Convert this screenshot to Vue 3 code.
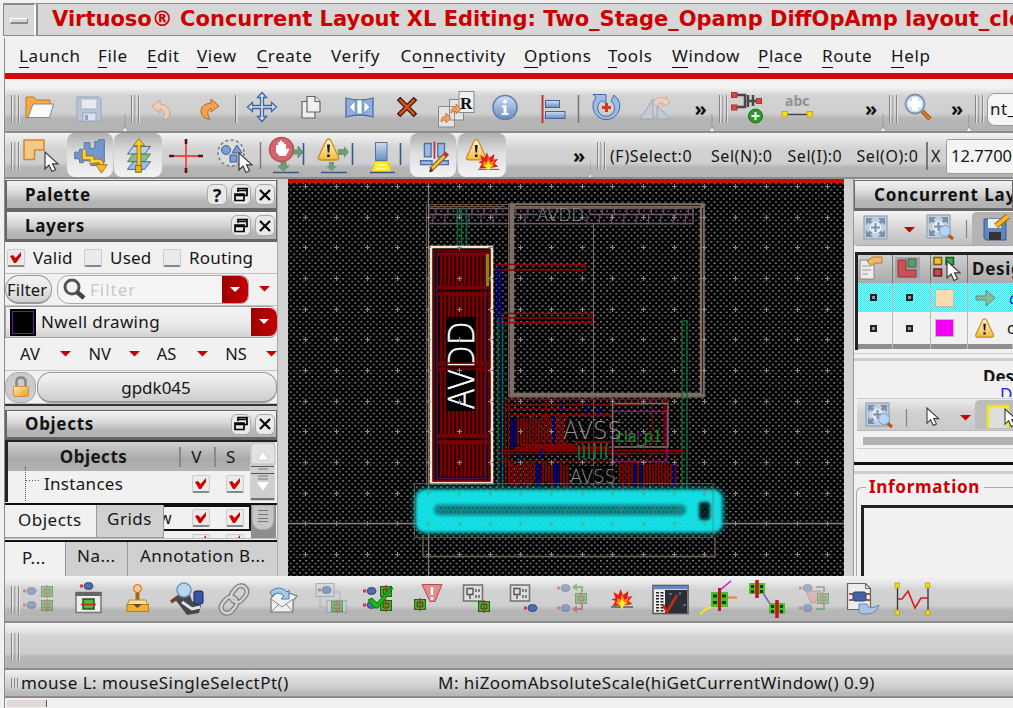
<script setup>
import { h } from 'vue'

// Icon slot: box is [x, y, w, h] in window coordinates, so a toolbar is a row of adjacent slots.
const Ic = (props, { slots }) =>
  h('svg', { width: props.box[2], height: props.box[3], viewBox: props.box.join(' '), class: 'ic' }, slots.default ? slots.default() : [])
Ic.props = ['box']

const menus = [
  ['', 'L', 'aunch', 79], ['', 'F', 'ile', 49], ['', 'E', 'dit', 50], ['', 'V', 'iew', 59.5], ['', 'C', 'reate', 74.5],
  ['Ver', 'i', 'fy', 69.5], ['Co', 'n', 'nectivity', 123.5], ['', 'O', 'ptions', 84], ['', 'T', 'ools', 64],
  ['', 'W', 'indow', 86], ['', 'P', 'lace', 64], ['', 'R', 'oute', 69], ['', 'H', 'elp', 60],
]

let seed = 7
const rnd = () => (seed = (seed * 16807) % 2147483647) / 2147483647
const crosses = []
for (let r = 0; r < 13; r++) for (let c = 0; c < 18; c++) crosses.push([Math.round(305.3 + c * 30.7) + 0.5, Math.round(186 + r * 30.65) + 0.5])
const crossPath = crosses.map(([x, y]) => `M${x - 2.5} ${y}h5M${x} ${y - 2.5}v5`).join('')
const stripes = []
for (let x = 440; x < 486; x += 4) stripes.push(x)
const bars = []
const fill = (x0, x1, y0, y1) => {
  for (let x = x0; x < x1; x += 3) {
    const k = rnd()
    bars.push({ x, y: y0 + Math.round(rnd() * 4), h: y1 - y0 - Math.round(rnd() * 4), c: k < 0.22 ? '#00008c' : '#800000' })
  }
}
fill(511, 566, 415, 445)
fill(509, 568, 461, 485)
fill(619, 676, 461, 485)
const ticks = []
for (let x = 436; x < 506; x += 12) ticks.push(x)
for (let x = 516; x < 538; x += 12) ticks.push(x)
for (let x = 590; x < 692; x += 12.3) ticks.push(x)
const greens = [579, 584, 589, 595, 601, 606]
</script>

<template>
  <div class="page">
    <svg class="defs" width="0" height="0">
      <defs>
        <linearGradient id="gor" x1="0" y1="0" x2="1" y2="1"><stop offset="0" stop-color="#ffe9a8" /><stop offset="1" stop-color="#ee9a20" /></linearGradient>
        <linearGradient id="gbl" x1="0" y1="0" x2="0" y2="1"><stop offset="0" stop-color="#cfdff2" /><stop offset="1" stop-color="#6a8cc0" /></linearGradient>
        <linearGradient id="gye" x1="0" y1="0" x2="0" y2="1"><stop offset="0" stop-color="#fffbe0" /><stop offset="1" stop-color="#f3b93c" /></linearGradient>
        <g id="grip"><path d="M.5 0v28M4 0v28M7.500 0v28" stroke="#858585" /><path d="M1.500 0v28M5 0v28M8.500 0v28" stroke="#eee" stroke-width=".7" /></g>
        <g id="inst"><rect x=".7" y="1.700" width="10.600" height="9.600" fill="#7ed84a" stroke="#1c6418" stroke-width="1.400" /><rect x="3" y="4" width="6" height="5" fill="#3fae2c" stroke="#123d10" /><path d="M6 0v13" stroke="#d42020" stroke-width="1.300" /></g>
        <g id="plug"><path d="M3 4h2M12 4h2.500" stroke="#8b8b9b" /><rect x="0" y="2.500" width="3" height="3" fill="#d33" /><rect x="4.500" y=".8" width="8" height="6.400" rx="2.500" fill="#4a70b4" stroke="#28407a" /></g>
        <g id="cursor"><path d="M0 0v17l4-4 3 6.500 3.500-1.700-3-6h5.500z" fill="#fff" stroke="#3a3a3a" stroke-width="1.200" /></g>
        <g id="warn"><path d="M11 1Q12.500 1 13.500 3L21 19Q22 22 19 22H3Q0 22 1 19L8.500 3Q9.500 1 11 1z" fill="url(#gye)" stroke="#c98a18" stroke-width="1.300" /><path d="M9.500 6.500h3l-.7 8h-1.600zM9.700 16.500h2.600v2.600H9.700z" fill="#1a1a1a" /></g>
        <g id="burst"><path d="M1 17L4 12 0 10.500l4-1.500L2 3l5 3L9 0l2.500 6L17 2l-1 6 5-1-4 5 4 3-5 1z" fill="#e81c10" /><path d="M5 14l1-5 3 2 1.500-6L13 11l4-3-1.500 6z" fill="#ff8a1c" /><path d="M10.500 9l2 4.500 4 .5-4 2-2 5-2-5-4-2 4-.5z" fill="#ffee20" /></g>
        <g id="frame4"><rect x="0" y="0" width="23" height="23" fill="#c3cedb" stroke="#90a2ba" stroke-width="1.200" /><path d="M2 9V2h7L6.500 4.500 9 7 7 9 4.500 6.500zM14 2h7v7l-2.500-2.500L16 9l-2-2 2.500-2.500zM2 14v7h7l-2.500-2.500L9 16l-2-2-2.500 2.500zM21 14v7h-7l2.500-2.500L14 16l2-2 2.500 2.500z" fill="#7890ac" /><circle cx="11.500" cy="11.500" r="6" fill="#e6ecf3" /><path d="M11.500 7v9M7 11.500h9" stroke="#7890ac" stroke-width="2" /></g>
        <g id="lens"><path d="M8 9l6 5" stroke="#b4561a" stroke-width="3" /><circle cx="6" cy="6" r="5.500" fill="#b4d4f4" stroke="#7aa0cc" /></g>
        <g id="dn"><path d="M0 0h11L5.500 5.500z" fill="#c40000" /></g>
        <g id="doc"><rect width="11" height="16" fill="#e8e8e8" stroke="#777" /></g>
      </defs>
    </svg>

    <header class="title">
      <span class="sysbtn"><i /></span>
      <span class="caption">Virtuoso® Concurrent Layout XL Editing: Two_Stage_Opamp DiffOpAmp layout_cle</span>
    </header>

    <div class="win">
      <nav class="menu">
        <span v-for="m in menus" :key="m[1] + m[2]" :style="{ width: m[3] + 'px' }">{{ m[0] }}<b>{{ m[1] }}</b>{{ m[2] }}</span>
      </nav>

      <div class="tb tb1">
        <Ic :box="[5, 79, 17, 54]"><use href="#grip" x="11" y="95" /></Ic>
        <Ic :box="[22, 79, 40, 54]">
          <path d="M26 118V98q0-1 1-1h7l2 3h14v7H34l-5 10z" fill="#f2ab45" stroke="#c8781c" /><path d="M33 104h20.500l-4 13.500H28z" fill="#fafafa" stroke="#888" />
        </Ic>
        <Ic :box="[62, 79, 60, 54]">
          <path d="M77 97h22l2 2v22H77z" fill="#b9c4d6" stroke="#9aa6ba" /><rect x="81" y="99" width="16" height="10" fill="#e6eaf2" stroke="#aab4c6" /><rect x="83" y="113" width="13" height="8" fill="#dde2ec" stroke="#9aa6ba" /><rect x="85" y="115" width="3" height="5" fill="#93a2bd" />
        </Ic>
        <Ic :box="[122, 79, 24, 54]"><path d="M121 132l4-5 4 5zM125 114v14" fill="#f1f1f1" stroke="#999" /><use href="#grip" x="131" y="95" /></Ic>
        <Ic :box="[146, 79, 44, 54]"><path d="M152 106l8-6v4q10 1 10 9 0 5-7 7 4-9-3-11v4z" fill="#eccfbc" stroke="#c9a48c" /></Ic>
        <Ic :box="[190, 79, 52, 54]"><path d="M219 106l-8-7v4q-10 1-10 8 0 7 9 8.500-5-8.500 1-11.500v4z" fill="#f3a152" stroke="#b96718" /><path d="M235.500 95v28" stroke="#777" /><path d="M237 95v28" stroke="#eee" /></Ic>
        <Ic :box="[242, 79, 48, 54]"><path d="M262 92.500l4.500 5h-3v8h8v-3l5 4.500-5 4.500v-3h-8v8h3l-4.500 5-4.500-5h3v-8h-8v3l-5-4.500 5-4.500v3h8v-8h-3z" fill="#cfe0f4" stroke="#42649c" stroke-width="1.300" /></Ic>
        <Ic :box="[290, 79, 46, 54]"><g fill="#efefef" stroke="#666" stroke-width="1.200"><path d="M302 101.500h13V118h-13z" /><path d="M307 96.500h8l5 5V112h-13z" /><path d="M315 96.500v5h5" /></g></Ic>
        <Ic :box="[336, 79, 52, 54]"><path d="M346 98q14 4 27 0v19q-13-4-27 0z" fill="#8fb0dc" stroke="#4a6ca6" stroke-width="1.300" /><path d="M349 107l6-6v12zM370 107l-6-6v12zM357 100h5v14h-5z" fill="#fff" stroke="#5d7fb5" stroke-width=".7" /></Ic>
        <Ic :box="[388, 79, 44, 54]"><path d="M398.500 98.500l17 17M415.500 98.500l-17 17" stroke="#3c1208" stroke-width="5" /><path d="M399.500 99.500l15 15M414.500 99.500l-15 15" stroke="#d2501c" stroke-width="2.800" /></Ic>
        <Ic :box="[432, 79, 50, 54]">
          <path d="M438.500 106.500h16v20.500h-16zM449.500 99.500h14V120h-14z" fill="#e4e4e4" stroke="#888" /><rect x="459" y="91.500" width="15" height="21" fill="#f0f0f0" stroke="#888" /><path d="M441 122q0-6 5-6v-3l5 5-5 5v-3q-3 0-5 2zM451 113q0-6 5-6v-3l5 5-5 5v-3q-3 0-5 2z" fill="#f0a060" stroke="#b87030" stroke-width=".8" /><text x="460" y="109" class="serifR">R</text>
        </Ic>
        <Ic :box="[482, 79, 48, 54]"><circle cx="505" cy="107.500" r="12" fill="url(#gbl)" stroke="#5d7fb5" stroke-width="1.600" /><circle cx="505" cy="101.500" r="2" fill="#fff" /><path d="M502 105.500h4.500v7.500h2v2h-7v-2h2v-5.500H502z" fill="#fff" /></Ic>
        <Ic :box="[530, 79, 56, 54]"><path d="M542.500 95v28" stroke="#c03434" stroke-width="2" /><rect x="545.500" y="100.500" width="14" height="7" fill="url(#gbl)" stroke="#44659c" /><rect x="545.500" y="111.500" width="19.500" height="7" fill="url(#gbl)" stroke="#44659c" /><path d="M578.500 95v28" stroke="#777" stroke-width="1.500" /></Ic>
        <Ic :box="[586, 79, 44, 54]"><path d="M614 95l-3 6a8.500 8.500 0 1 1-9-.5l4 3V94.500H593l3 3a13.500 13.500 0 1 0 18-2.500z" fill="#9dbce4" stroke="#4568a4" /><path d="M606.500 103v9M602 107.500h9" stroke="#d43a1c" stroke-width="3" /></Ic>
        <Ic :box="[630, 79, 56, 54]"><path d="M640 119l13-20v20zM657 119v-14l13 14z" fill="#c3cad3" stroke="#9fa8b4" /><path d="M653 103q4-9 13-4v-3l4 7-8 3 1-3q-5-2-6 4z" fill="#ecd0bf" stroke="#caa994" stroke-width=".8" /></Ic>
        <Ic :box="[686, 79, 30, 54]"><text x="694.500" y="115.500" class="more">»</text><path d="M708 132l4-5 4 5M712 114v14" fill="#f1f1f1" stroke="#999" /></Ic>
        <Ic :box="[716, 79, 14, 54]"><use href="#grip" x="719" y="95" /></Ic>
        <Ic :box="[730, 79, 40, 54]"><path d="M737 95h8v12h-8M748 95v12M748 101h8M753 95v11" fill="none" stroke="#484848" stroke-width="2.500" /><rect x="731.500" y="92.500" width="5.500" height="5" fill="#d44" stroke="#a33" /><rect x="731.500" y="105" width="5.500" height="5" fill="#d44" stroke="#a33" /><rect x="756.500" y="98.500" width="5" height="5" fill="#d44" stroke="#a33" /><circle cx="755.500" cy="116" r="7" fill="#2f9a2c" stroke="#1c6a1a" /><path d="M755.500 112v8M751.500 116h8" stroke="#fff" stroke-width="2" /></Ic>
        <Ic :box="[770, 79, 58, 54]"><text x="785" y="106" class="abc">abc</text><path d="M785 114.500h24" stroke="#3b4654" stroke-width="1.500" /><rect x="782" y="111.500" width="5.500" height="5.500" fill="#f6d81c" stroke="#b99a10" stroke-width=".7" /><rect x="807" y="111.500" width="5.500" height="5.500" fill="#f6d81c" stroke="#b99a10" stroke-width=".7" /></Ic>
        <Ic :box="[828, 79, 58, 54]"><text x="865" y="115.500" class="more">»</text><path d="M879 132l4-5 4 5M883 114v14" fill="#f1f1f1" stroke="#999" /></Ic>
        <Ic :box="[886, 79, 14, 54]"><use href="#grip" x="889" y="95" /></Ic>
        <Ic :box="[900, 79, 44, 54]"><path d="M922 111l8 8" stroke="#8a4a1a" stroke-width="4.500" /><path d="M922 111l8 8" stroke="#e07820" stroke-width="2.500" /><circle cx="915" cy="104" r="9.500" fill="#cfe0f2" stroke="#7b92ac" stroke-width="1.800" /><path d="M912 97.500h6v3.500h3.500v6H918v3.500h-6V107h-3.500v-6h3.500z" fill="#fff" /></Ic>
        <Ic :box="[944, 79, 29, 54]"><text x="951" y="115.500" class="more">»</text><path d="M965 132l4-5 4 5M969 114v14" fill="#f1f1f1" stroke="#999" /></Ic>
        <Ic :box="[973, 79, 14, 54]"><use href="#grip" x="975" y="95" /></Ic>
        <span class="combo">nt_</span>
      </div>

      <div class="tb tb2">
        <Ic :box="[5, 133, 17, 46]"><use href="#grip" x="11" y="142" /></Ic>
        <Ic :box="[22, 133, 45, 46]"><path d="M24 140h20v10h-9.500v9.500H24z" fill="#f5c888" stroke="#cf8630" stroke-width="1.500" /><use href="#cursor" x="45" y="152" /></Ic>
        <Ic :box="[67, 133, 46, 46]" class="on"><path d="M74 153h5v-3h5v-7h6v6h5v-7h4v-2h6v24h-6v3h-8v-5h-8v2h-4v-4h-5z" fill="#7396cb" stroke="#5074aa" /><path d="M84 151v8h8v4q8-2 10 1v5" fill="none" stroke="#a8781a" stroke-width="5" /><path d="M84 150.500v8.500h8v4q8-2 10 1v5" fill="none" stroke="#fbd13c" stroke-width="3" /><path d="M96 166h12l-6 9z" fill="#f6b820" stroke="#a8781a" /></Ic>
        <Ic :box="[114, 133, 48, 46]" class="on sh1"><path d="M133 147h18l-6 8h-18z" fill="#b7d0f0" stroke="#3b5d96" /><path d="M133 155h18l-6 8h-18z" fill="#8cbc8c" stroke="#4a7a4c" /><path d="M133 163h18l-6 8h-18z" fill="#9dbde8" stroke="#3b5d96" /><path d="M139 139l6 7h-4v22h-4v-22h-4z" fill="#f8c81c" stroke="#9a7812" /><rect x="135.500" y="167" width="6" height="7" fill="#e8b810" stroke="#8a6a10" /></Ic>
        <Ic :box="[162, 133, 46, 46]"><path d="M169 156h34M186 140v32" stroke="#f04848" stroke-width="1.800" /><path d="M169 156h5M198 156h5M186 139v5M186 168v5" stroke="#5c1010" stroke-width="2.600" /></Ic>
        <Ic :box="[208, 133, 60, 46]"><circle cx="231" cy="153" r="13" fill="#dcdcdc" stroke="#777" stroke-width="1.400" stroke-dasharray="3 2.500" /><circle cx="226" cy="150" r="4.500" fill="#7c9fd0" stroke="#3f5f97" /><path d="M237 145l5 8h-10zM230 155h7v7h-7z" fill="#7c9fd0" stroke="#3f5f97" /><use href="#cursor" x="239" y="153" /><path d="M260.500 142v27" stroke="#777" stroke-width="1.400" /></Ic>
        <Ic :box="[268, 133, 46, 46]"><circle cx="281.500" cy="149.500" r="12" fill="#d9636a" stroke="#b0555a" stroke-width="1.500" /><path d="M276 152v-7h2v-3h2v-1.500h2v1.500h2v2h2v6l2-2 1.500 1.500-4 6.500h-6z" fill="#fff" /><path d="M293 150h5v-4l5 6-5 6v-4h-5zM281 162h5v4h3l-5.500 5-5.500-5h3z" fill="#6c9c78" stroke="#54785c" stroke-width=".6" /><path d="M303.500 143v22M273 172.500h26" stroke="#38588c" stroke-width="1.600" /></Ic>
        <Ic :box="[314, 133, 46, 46]"><path d="M338 149h6v-3l5 6-5 6v-3h-6zM329 162h5v4h3l-5.500 5-5.500-5h3z" fill="#6c9c78" /><use href="#warn" x="317.500" y="138" /><path d="M352.500 143v22M321 172.500h26" stroke="#38588c" stroke-width="1.600" /></Ic>
        <Ic :box="[360, 133, 48, 46]"><rect x="375.500" y="142.500" width="11.500" height="18" fill="url(#gbl)" stroke="#54749c" /><path d="M375 161.500h13l3 10h-19z" fill="#f8ee20" stroke="#e0d400" /><path d="M378 165h7M377 168.500h9" stroke="#fff8b0" stroke-width="1.500" /><path d="M370 172.500h25M400.500 143v22" stroke="#38588c" stroke-width="1.600" /></Ic>
        <Ic :box="[410, 133, 46, 46]" class="on sh2"><path d="M424 144h7v14h-7zM438 144h7v14h-7zM420 162h12v4h-12zM438 162h11v4h-11z" fill="#9db9e2" stroke="#4b6ea8" stroke-width="1.400" /><path d="M434.500 142v18" stroke="#c03838" stroke-width="2" /><path d="M446 156l-15 15" stroke="#7a4a10" stroke-width="5" /><path d="M446 156l-14 14" stroke="#f6c430" stroke-width="3" /><path d="M445 157l3-3" stroke="#c03030" stroke-width="5" /><path d="M429 174l1-4 3 3z" fill="#222" /></Ic>
        <Ic :box="[458, 133, 48, 46]" class="on sh2"><use href="#warn" x="465" y="139" /><path d="M478 171h22" stroke="#555" /><use href="#burst" x="478" y="153" /></Ic>
        <Ic :box="[506, 133, 85, 46]"><text x="573" y="163" class="more">»</text><path d="M587 178l4-5 4 5M591 160v14" fill="#f1f1f1" stroke="#999" /></Ic>
        <Ic :box="[591, 133, 19, 46]"><use href="#grip" x="597" y="142" /></Ic>
        <span class="sel s1">(F)Select:0</span><span class="sel s2">Sel(N):0</span><span class="sel s3">Sel(I):0</span><span class="sel s4">Sel(O):0</span>
        <span class="sel xl">X</span><span class="coord">12.7700</span>
      </div>

      <main class="main">
        <aside class="left">
          <div class="hd"><strong>Palette</strong><i class="hb">?</i><i class="hb"><svg width="16" height="16"><path d="M5 5V1.500h9v7h-3M5 3.500h9M2 7h9v6.500H2zM2 8.500h9" fill="none" stroke="#000" stroke-width="1.700" /></svg></i><i class="hb"><svg width="16" height="16"><path d="M3 3l10 10M13 3L3 13" stroke="#000" stroke-width="2.200" /></svg></i></div>
          <div class="hd"><strong>Layers</strong><i class="hb"><svg width="16" height="16"><path d="M5 5V1.500h9v7h-3M5 3.500h9M2 7h9v6.500H2zM2 8.500h9" fill="none" stroke="#000" stroke-width="1.700" /></svg></i><i class="hb"><svg width="16" height="16"><path d="M3 3l10 10M13 3L3 13" stroke="#000" stroke-width="2.200" /></svg></i></div>
          <div class="row checks">
            <i class="cb"><svg width="18" height="18"><path d="M3 7l3-1 2.500 3L14 3v4l-5 7H7z" fill="#d00000" /></svg></i><span class="w1">Valid</span>
            <i class="cb" /><span class="w2">Used</span><i class="cb" /><span>Routing</span>
          </div>
          <div class="row filter">
            <span class="fbtn">Filter</span>
            <span class="finput"><svg width="24" height="26"><circle cx="10" cy="10" r="7" fill="none" stroke="#555" stroke-width="3" /><path d="M15 15l7 6" stroke="#444" stroke-width="4.500" /></svg><em>Filter</em><i class="drop"><svg width="12" height="8"><path d="M1 1h10L6 6z" fill="#fff" /></svg></i></span>
            <svg class="sm" width="12" height="7"><use href="#dn" /></svg>
          </div>
          <div class="row nwell"><i class="sw" /><span>Nwell drawing</span><i class="drop"><svg width="12" height="8"><path d="M1 1h10L6 6z" fill="#fff" /></svg></i></div>
          <div class="row av">
            <span>AV<svg width="12" height="7"><use href="#dn" /></svg></span><span>NV<svg width="12" height="7"><use href="#dn" /></svg></span><span>AS<svg width="12" height="7"><use href="#dn" /></svg></span><span>NS<svg width="12" height="7"><use href="#dn" /></svg></span>
          </div>
          <div class="row pdk"><i class="lock"><svg width="20" height="24"><path d="M5.500 12V7q0-4.500 4.500-4.500T14.500 7v5" fill="none" stroke="#888" stroke-width="2.500" /><rect x="2.500" y="11.500" width="15" height="10" rx="1" fill="url(#gor)" stroke="#d09040" /></svg></i><span>gpdk045</span></div>
          <div class="gap" />
          <div class="hd objh"><strong>Objects</strong><i class="hb"><svg width="16" height="16"><path d="M5 5V1.500h9v7h-3M5 3.500h9M2 7h9v6.500H2zM2 8.500h9" fill="none" stroke="#000" stroke-width="1.700" /></svg></i><i class="hb"><svg width="16" height="16"><path d="M3 3l10 10M13 3L3 13" stroke="#000" stroke-width="2.200" /></svg></i></div>
          <div class="tree">
            <div class="grid">
              <div class="th"><strong>Objects</strong><span>V</span><span>S</span></div>
              <div class="tr"><i class="twig" /><span class="nm">Instances</span><i class="cb"><svg width="18" height="18"><path d="M3 7l3-1 2.500 3L14 3v4l-5 7H7z" fill="#d00000" /></svg></i><i class="cb"><svg width="18" height="18"><path d="M3 7l3-1 2.500 3L14 3v4l-5 7H7z" fill="#d00000" /></svg></i></div>
            </div>
            <svg class="scroll" width="26" height="60"><rect width="25" height="59" fill="#cfcfcf" /><path d="M1 22V5q0-4 4-4h16q4 0 4 4v17z" fill="#e2e2e2" stroke="#bbb" /><path d="M7 18l6-9 6 9z" fill="#fff" stroke="#bbb" stroke-width=".6" /><path d="M1 24.500h23M1 31.500h23" stroke="#555" /><path d="M8 27h10M8 34h10M8 37h10" stroke="#777" /><path d="M7 40h12l-6 9z" fill="#fff" /><path d="M1 57h23" stroke="#555" stroke-width="1.500" /></svg>
          </div>
          <div class="tabs t1">
            <span class="tab act">Objects</span><span class="tab g">Grids</span>
            <div class="peek"><div class="prow"><b>w</b><i class="cb"><svg width="18" height="18"><path d="M3 7l3-1 2.500 3L14 3v4l-5 7H7z" fill="#d00000" /></svg></i><i class="cb"><svg width="18" height="18"><path d="M3 7l3-1 2.500 3L14 3v4l-5 7H7z" fill="#d00000" /></svg></i></div>
              <div class="prow2"><i class="cb"><svg width="18" height="18"><path d="M3 7l3-1 2.500 3L14 1v4z" fill="#d00000" /></svg></i><i class="cb"><svg width="18" height="18"><path d="M3 7l3-1 2.500 3L14 1v4z" fill="#d00000" /></svg></i></div></div>
            <svg width="25" height="34"><rect width="25" height="34" fill="#8e8e8e" /><path d="M1 0h22v14q0 11-11 11T1 14z" fill="#c6c6c6" stroke="#9a9a9a" /><path d="M7 5.500h10M7 9.500h10M7 13.500h10M7 16.500h10" stroke="#777" /></svg>
          </div>
          <div class="tabs t2"><span class="tab act p">P...</span><span class="tab n">Na...</span><span class="tab a">Annotation B...</span></div>
        </aside>

        <svg class="canvas" width="556" height="397" viewBox="288 179 556 397">
          <defs>
            <pattern id="dots" patternUnits="userSpaceOnUse" x="305.300" y="186" width="6.140" height="6.130"><rect x="0" y="0" width="1.900" height="1.400" fill="#888" /><rect x="3.070" y="3.060" width="1.900" height="1.400" fill="#888" /></pattern>
            <filter id="soft" x="-5%" y="-30%" width="110%" height="160%"><feGaussianBlur stdDeviation="3" /></filter>
            <filter id="soft2" x="-50%" y="-50%" width="200%" height="200%"><feGaussianBlur stdDeviation="1.800" /></filter>
          </defs>
          <rect x="288" y="179" width="556" height="397" fill="#000" />
          <rect x="288" y="183" width="556" height="393" fill="url(#dots)" />
          <path d="M428.500 183v393" stroke="#7c8078" stroke-width="1.300" />
          <path d="M288 523.500h556" stroke="#8a7c8e" stroke-width="1.300" />
          <path d="M593.500 224v262" stroke="#6c6c6c" />
          <g fill="none">
            <path d="M428 208.500h80M428 223.500h80M510 208.500h183v15H510M428 214.500h110M590 214.500h103" stroke="#74586e" stroke-width="1.300" />
            <path v-for="x in ticks" :key="x" :d="`M${x} 209v6M${x - 3} 215v8`" stroke="#7a5a72" />
            <path d="M426.500 484V204.500h82v192M429 206.500h76" stroke="#6a5448" />
            <rect x="512" y="205.500" width="190" height="189.500" stroke="#7d6e64" stroke-width="4.500" />
            <rect x="509" y="203.500" width="195.500" height="193.500" stroke="#6e5f56" />
            <path d="M702.500 208v186M515 205.500h186" stroke="#2c1c14" stroke-width="1" />
            <path d="M457.500 208v44M461.500 208v40M466.500 208v44" stroke="#006a38" stroke-width="1.600" />
            <path d="M495 264.500h90v5.500h-90M498 313.500h94v9h-94M498 318h94" stroke="#900000" stroke-width="1.600" />
            <path d="M497.500 267v60M500.500 267v60" stroke="#00009a" stroke-width="1.600" />
            <path d="M498 318v168M502.500 318v168" stroke="#00703c" stroke-width="1.400" />
            <rect x="682" y="321" width="5" height="170" stroke="#007038" stroke-width="1.400" />
            <path d="M500.500 330v155" stroke="#00007c" />
          </g>
          <text x="537" y="221" class="lbl" textLength="47" lengthAdjust="spacingAndGlyphs" font-size="17">AVDD</text>

          <rect x="431" y="247" width="61" height="236" fill="#000" stroke="#f6e4cf" stroke-width="2.600" />
          <rect x="434" y="250.500" width="55" height="230" fill="#140000" stroke="#7c0000" stroke-width="1.600" />
          <rect v-for="x in stripes" :key="'s' + x" :x="x" y="255" width="2.600" height="222" fill="#780000" />
          <path d="M438 287.500h50M438 294h50M438 363h50M438 369.500h50M438 436h50M438 442h50M438 254h50" stroke="#7a0000" stroke-width="3.500" />
          <path d="M438 290.500h50M438 366.500h50M438 439h50" stroke="#100" stroke-width="1.600" />
          <rect x="437" y="253.500" width="48.500" height="225" fill="none" stroke="#481458" stroke-width="1.400" />
          <rect x="486" y="254" width="3" height="32" fill="#958400" />
          <rect x="446" y="317" width="30" height="94" fill="#000" />
          <text transform="translate(473.500 409.500) rotate(-90)" textLength="88" lengthAdjust="spacingAndGlyphs" class="big">AVDD</text>
          <path d="M438 363h50M438 369h50M438 366h50" stroke="#6a0000" stroke-width="1.600" />

          <g fill="none">
            <path d="M505 399.500h163M505 405h140M505 409h75M511 415h94M500 450.500h184M500 453.500h184M498 461.500h166M535 447h70" stroke="#8a0000" stroke-width="1.300" />
            <path d="M505.500 400v85M508.500 404v80M546 398v20M664 398v50M666 400v50M652 400v45M676 460v25" stroke="#8a0000" stroke-width="1.200" />
            <rect v-for="(b, i) in bars" :key="'b' + i" :x="b.x" :y="b.y" width="1.900" :height="b.h" :fill="b.c" />
            <path d="M520 445h55M515 448h94M575 415h36M575 442h36" stroke="#800000" stroke-width="2.500" />
            <path v-for="x in greens" :key="'g' + x" :d="`M${x} 445v14`" stroke="#00804a" stroke-width="1.600" />
            <path d="M562 402v10M587 405v10M599 405v10M520 452v8M541 448v12" stroke="#0000a0" stroke-width="1.500" />
            <path d="M613 411.500h54v50h-54zM630 430v12M638 430v12" stroke="#8a0a8e" stroke-width="1.300" />
            <path d="M612.500 398v88M614 403.500h54v43.500h-54" stroke="#7c7068" stroke-width="1.400" />
            <path d="M617 455q10-3 15 6M647 461q2-10 17-7" stroke="#8a0000" />
          </g>
          <rect x="565" y="421" width="47" height="20" fill="#000" opacity=".6" /><rect x="571" y="466" width="44" height="17" fill="#000" opacity=".7" />
          <text x="563" y="439" class="lbl" textLength="59" lengthAdjust="spacingAndGlyphs" font-size="24">AVSS</text>
          <text x="570" y="483" class="lbl" textLength="46" lengthAdjust="spacingAndGlyphs" font-size="20">AVSS</text>
          <text x="616" y="441.500" class="grn" textLength="46" lengthAdjust="spacingAndGlyphs">cla_p1</text>

          <rect x="415" y="489" width="308" height="44" rx="9" fill="#00a8ac" filter="url(#soft)" />
          <rect x="416.500" y="490.500" width="305" height="41" rx="8" fill="#10e2e6" filter="url(#soft2)" />
          <rect x="434" y="504.500" width="252" height="11" rx="5" fill="#088488" filter="url(#soft2)" />
          <path d="M440 508h240M442 512h236" stroke="#0a4a50" stroke-width="1.500" stroke-dasharray="2 2" opacity=".7" />
          <path d="M462 505v9M524 505v9M566 505v9M621 505v9M654 505v9M678 505v9" stroke="#9a7068" stroke-width="1.300" stroke-dasharray="2 1" opacity=".6" />
          <rect x="699" y="502" width="11" height="18" rx="3" fill="#001a1c" filter="url(#soft2)" />
          <rect x="414.500" y="483.500" width="298.500" height="54" fill="none" stroke="#7c6a5c" opacity=".7" />
          <path d="M423 537v19.500h292V537" fill="none" stroke="#6f6250" stroke-width="1.300" />
          <rect x="413" y="486" width="311" height="50" fill="url(#dots)" opacity=".3" />
          <path :d="crossPath" stroke="#8e8e8e" stroke-width="1.100" />
          <rect x="288" y="179" width="556" height="4" fill="#cc0a0a" />
        </svg>

        <aside class="right">
          <div class="hd rh"><strong>Concurrent Lay</strong></div>
          <div class="rtb">
            <Ic :box="[854, 211, 46, 35]"><use href="#frame4" x="864" y="216" /></Ic>
            <Ic :box="[900, 211, 22, 35]"><use href="#dn" x="904" y="227" /></Ic>
            <Ic :box="[922, 211, 50, 35]"><use href="#frame4" x="927" y="215" /><use href="#lens" x="939" y="225" /><path d="M966.500 220v18" stroke="#888" stroke-width="1.300" /></Ic>
            <Ic :box="[972, 211, 41, 35]"><path d="M972 246v-29q0-5 5-5h36v34z" fill="#b4b4b4" /><path d="M984 219h22v21h-20l-2-2z" fill="#5f86bf" stroke="#38588c" /><rect x="988" y="219" width="13" height="9" fill="#e8eef6" /><rect x="989" y="232" width="12" height="8" fill="#333" /><path d="M1008 216l-12 10" stroke="#9a6410" stroke-width="6" /><path d="M1008 216l-12 10" stroke="#f8b628" stroke-width="4" /></Ic>
          </div>
          <div class="tbl">
            <div class="trow head">
              <span><svg width="35" height="28" viewBox="858 255 35 28"><path d="M860 260h14v19h-14z" fill="#ececec" stroke="#888" /><path d="M862 266h8M862 270h9M862 274h6" stroke="#999" /><path d="M867 261l6-4h9v6h-7l-4 3z" fill="#f3b868" stroke="#b8782c" /></svg></span>
              <span><svg width="36" height="28" viewBox="894 255 36 28"><rect x="896" y="257" width="25" height="22" fill="#a4a4ac" /><path d="M899 260h8v10h10v7h-18z" fill="#cc5058" stroke="#9a3038" /><rect x="909" y="259" width="8" height="8" fill="#5c9c6c" stroke="#3c6c48" /></svg></span>
              <span><svg width="37" height="28" viewBox="931 255 37 28"><rect x="934" y="257.500" width="7.500" height="7" fill="#f8c030" stroke="#7c5a10" stroke-width="1.500" /><rect x="946" y="257.500" width="7.500" height="7" fill="#3ca84c" stroke="#1c5a24" stroke-width="1.500" /><rect x="934" y="269" width="7.500" height="7" fill="#c84850" stroke="#6c1c20" stroke-width="1.500" /><use href="#cursor" x="947" y="261" /></svg></span>
              <span class="dz">Desig</span>
            </div>
            <div class="trow r1"><span><i class="bx" /></span><span><i class="bx" /></span><span><i class="col peach" /></span><span class="last"><svg width="22" height="20"><path d="M1 8h10V2l9 8-9 8v-6H1z" fill="#8cb89c" stroke="#5f8c70" /></svg><b class="blue">c</b></span></div>
            <div class="trow r2"><span><i class="bx" /></span><span><i class="bx" /></span><span><i class="col mag" /></span><span class="last"><svg width="20" height="22" viewBox="0 0 23 23"><use href="#warn" /></svg><b>c</b></span></div>
            <div class="trow r3"><span /><span /><span /><span /></div>
          </div>
          <div class="band" />
          <div class="cut"><strong>Des</strong></div>
          <div class="cut2"><span>D</span></div>
          <div class="rtb2">
            <Ic :box="[857, 401, 48, 30]"><use href="#frame4" x="866" y="405" /><use href="#lens" x="878" y="415" /></Ic>
            <Ic :box="[905, 401, 20, 30]"><path d="M906.500 411v18" stroke="#888" stroke-width="1.300" /></Ic>
            <Ic :box="[925, 401, 50, 30]"><g transform="translate(927 410) scale(.9)"><use href="#cursor" /></g><use href="#dn" x="960" y="417" /></Ic>
            <Ic :box="[975, 401, 38, 30]"><path d="M975 431v-24q0-5 5-5h33v29z" fill="#bdbdbd" /><path d="M988 430v-22h20v22" fill="#ddd" stroke="#f4e41c" stroke-width="2.600" /><g transform="translate(1005 411) scale(.9)"><use href="#cursor" /></g></Ic>
          </div>
          <div class="hbar" />
          <div class="blk" />
          <div class="info"><div class="leg"><i /><strong>Information</strong><i class="r" /></div><div class="side"><div class="box" /></div></div>
        </aside>
      </main>

      <div class="tb tb3">
        <Ic :box="[5, 576, 17, 47]"><use href="#grip" x="11" y="586" /></Ic>
        <Ic :box="[22, 576, 42, 47]"><g opacity=".45"><use href="#plug" x="23" y="587" /><use href="#plug" x="23" y="601" /><use href="#inst" x="41" y="585" /><use href="#inst" x="41" y="599" /></g></Ic>
        <Ic :box="[64, 576, 48, 47]"><use href="#plug" x="80" y="582" /><rect x="76" y="592.500" width="25" height="20" fill="#eee" stroke="#777" stroke-width="1.500" /><path d="M75.500 594h26" stroke="#666" stroke-width="4" /><path d="M83 599h11v10H83z" fill="#4cb83c" stroke="#1c5a18" stroke-width="1.500" /><path d="M81 604.500h15" stroke="#d42020" stroke-width="1.500" /></Ic>
        <Ic :box="[112, 576, 50, 47]"><path d="M137.500 592v12" stroke="#a86418" stroke-width="4" /><circle cx="137.500" cy="588.500" r="4" fill="#ffc890" stroke="#b86c20" /><path d="M129 600h17l2.500 7h-22z" fill="#f8dca0" stroke="#c08430" /><rect x="127" y="604.500" width="21.500" height="7" fill="#f3b030" stroke="#b87c20" /><path d="M133 604h9l-4.500 4z" fill="#5a4a30" /></Ic>
        <Ic :box="[162, 576, 50, 47]"><path d="M174 598l13 17 12-2 2-8-9-4-4-12z" fill="#44474e" /><path d="M182 602l10 7 8-2" stroke="#dfe3ea" stroke-width="3" fill="none" /><path d="M181 595l-10 7" stroke="#6a4430" stroke-width="3.500" /><circle cx="184" cy="590" r="7" fill="#b8d8f0" stroke="#6f98bc" stroke-width="1.500" /><rect x="194" y="591" width="9" height="13" rx="2" fill="#3a55a4" stroke="#20204c" /></Ic>
        <Ic :box="[212, 576, 46, 47]"><g fill="none" stroke="#858585" stroke-width="5.200"><rect x="-9" y="-6" width="18" height="12" rx="6" transform="translate(239 594) rotate(-50)" /><rect x="-9" y="-6" width="18" height="12" rx="6" transform="translate(229 605) rotate(-50)" /></g><g fill="none" stroke="#d4d4d4" stroke-width="2.400"><rect x="-9" y="-6" width="18" height="12" rx="6" transform="translate(239 594) rotate(-50)" /><rect x="-9" y="-6" width="18" height="12" rx="6" transform="translate(229 605) rotate(-50)" /></g></Ic>
        <Ic :box="[258, 576, 50, 47]"><path d="M271 598l5-5h13l8 3-4 5v11h-22z" fill="#f0f0f0" stroke="#777" stroke-width="1.200" /><path d="M271 599l11 8 11-8M271 612l8-8M293 612l-7-8" fill="none" stroke="#888" /><path d="M270 592q9-8 17 0l2-2v9h-8l3-3q-6-6-12 0z" fill="#a8c8e8" stroke="#4d7cb4" /></Ic>
        <Ic :box="[308, 576, 44, 47]"><g opacity=".55"><rect x="316" y="583.500" width="18" height="13" fill="#cfd6de" stroke="#7d8a98" /><use href="#plug" x="318" y="586" /><path d="M320 597v10h6M334 592h6v8" fill="none" stroke="#8a96a4" /><rect x="327" y="600.500" width="19" height="12" fill="#cfd6de" stroke="#7d8a98" /><use href="#inst" x="331" y="600" /></g></Ic>
        <Ic :box="[352, 576, 52, 47]"><use href="#plug" x="363" y="587" /><use href="#plug" x="363" y="601" /><use href="#inst" x="380" y="585" /><use href="#inst" x="380" y="599" /><path d="M368 600l4-2 5 5 13-15h3l-15 20h-3z" fill="#18b81c" stroke="#087408" /></Ic>
        <Ic :box="[404, 576, 48, 47]"><path d="M422 584.500h20l-7 17h-5z" fill="#e08c8c" stroke="#b44c4c" /><path d="M432 587v8M432 597v3" stroke="#fff" stroke-width="2.500" /><use href="#inst" x="414" y="598" /></Ic>
        <Ic :box="[452, 576, 46, 47]"><rect x="463.500" y="585" width="19" height="16" fill="#ddd" stroke="#777" stroke-width="1.600" /><path d="M467 588.500h6v6h-6zM470 595v4M476 589v3M479 589v3M476 595v3M479 595v3" fill="none" stroke="#555" stroke-width="1.400" /><use href="#inst" x="478" y="600" /></Ic>
        <Ic :box="[498, 576, 48, 47]"><rect x="510.500" y="585" width="19" height="16" fill="#ddd" stroke="#777" stroke-width="1.600" /><path d="M514 588.500h6v6h-6zM517 595v4M523 589v3M526 589v3M523 595v3M526 595v3" fill="none" stroke="#555" stroke-width="1.400" /><use href="#plug" x="524" y="604" /></Ic>
        <Ic :box="[546, 576, 50, 47]"><g opacity=".45"><use href="#plug" x="557" y="584" /><use href="#plug" x="557" y="604" /><use href="#inst" x="575" y="592" /><path d="M582 592v-5h-6" fill="none" stroke="#383" stroke-width="2" /><path d="M577 583v8l-5-4z" fill="#383" /><path d="M582 604v5h-6" fill="none" stroke="#a33" stroke-width="2" /><path d="M577 605v8l-5-4z" fill="#a33" /></g></Ic>
        <Ic :box="[596, 576, 46, 47]"><path d="M611 607h22" stroke="#555" stroke-width="1.400" /><use href="#burst" x="611.500" y="589" /></Ic>
        <Ic :box="[642, 576, 52, 47]"><rect x="653" y="585.500" width="35" height="28" fill="#eee" stroke="#555" stroke-width="1.500" /><path d="M653 587.500h35" stroke="#6888b8" stroke-width="3.500" /><rect x="665" y="590" width="22" height="23" fill="#2c3036" /><path d="M657.500 592v20M662 592v20" stroke="#222" stroke-width="3" stroke-dasharray="1.500 1.500" /><path d="M669 594h3M680 592v3M683 605h3" stroke="#4a8aa0" stroke-width="1.500" /><path d="M663 605l4 7 10-17" fill="none" stroke="#c82c10" stroke-width="2.600" /></Ic>
        <Ic :box="[694, 576, 50, 47]"><path d="M720 590l11-9" stroke="#d018d0" stroke-width="1.600" /><path d="M700 614l6-5 6-2" stroke="#f4e818" stroke-width="2" fill="none" /><path d="M727 597.500h10" stroke="#f08038" stroke-width="2" /><path d="M711 592h17v15h-17z" fill="#4cc02c" /><path d="M713 594.500h4v3h-4zM722 594.500h4v3h-4zM713 601h4v3h-4zM722 601h4v3h-4z" fill="#103c10" /><path d="M719.500 588v23" stroke="#c81414" stroke-width="3" /></Ic>
        <Ic :box="[744, 576, 48, 47]"><path d="M763 593l9 14" stroke="#8468b4" stroke-width="1.800" /><path d="M749 583h16v11h-16zM769 603h16v11h-16z" fill="#4cc02c" /><path d="M751 585h3v3h-3zM760 585h3v3h-3zM751 590h3v3h-3zM760 590h3v3h-3zM771 605h3v3h-3zM780 605h3v3h-3zM771 610h3v3h-3zM780 610h3v3h-3z" fill="#103c10" /><path d="M757 580v18M777 600v18" stroke="#c81414" stroke-width="3.500" /></Ic>
        <Ic :box="[792, 576, 48, 47]"><g opacity=".4"><use href="#plug" x="799" y="584" /><use href="#plug" x="799" y="604" /><path d="M806 591h15l-6 12h-4z" fill="#e09090" stroke="#b44c4c" /><use href="#inst" x="817" y="592" /><path d="M824 592v-5h-8M824 604v5h-8" fill="none" stroke="#383" stroke-width="2" /></g></Ic>
        <Ic :box="[840, 576, 48, 47]"><path d="M847.500 583.500h18l5 5v21h-23z" fill="#ececec" stroke="#666" stroke-width="1.200" /><path d="M865.500 583.500v5h5" fill="none" stroke="#666" /><path d="M849 594h4M866 594h4M849 600h4M866 600h4" stroke="#c44" stroke-width="2" /><rect x="853" y="592" width="13" height="9" rx="2" fill="#44639c" stroke="#28407a" /><path d="M859 604h8q1 7 12 1-3 10-15 9-5 0-5-4z" fill="#a8c4e4" stroke="#6888b4" /></Ic>
        <Ic :box="[888, 576, 125, 47]"><path d="M897.500 585v28M928 585v28" stroke="#333" stroke-width="1.300" /><path d="M898 599h4l6-8 7 17 6-10h7" fill="none" stroke="#d81818" stroke-width="1.600" /><path d="M895 583h5l-1 5h-4zM925 583h5v5h-4zM895 610h4l1 5h-5zM926 610h4v5h-5z" fill="#f4d41c" stroke="#b89810" stroke-width=".7" /></Ic>
      </div>
      <div class="tb tb4"><Ic :box="[5, 623, 17, 47]"><use href="#grip" x="11" y="633" /></Ic></div>
      <div class="tb status">
        <i class="g3" /><span class="m1">mouse L: mouseSingleSelectPt()</span><span class="m2">M: hiZoomAbsoluteScale(hiGetCurrentWindow() 0.9)</span>
      </div>
      <div class="foot"><i /></div>
    </div>
  </div>
</template>

<style>
html, body { background: #f1f1f1; margin: 0; overflow: hidden; }
</style>

<style scoped>
.page { width: 1013px; height: 708px; overflow: hidden; position: relative; background: #f1f1f1; font: 17px/20px 'Noto Sans', 'Open Sans', sans-serif; color: #161616; }
.page * { box-sizing: border-box; }
.defs { position: absolute; }
.page i { font-style: normal; display: block; flex: none; }
svg { flex: none; display: block; }
.title { height: 38px; display: flex; align-items: stretch; padding: 3px 0 2px 3px; }
.sysbtn { width: 33px; flex: none; background: #d8d8d8; border: 1px solid #8a8a8a; border-top: 2px solid #8a8a8a; border-right: 2px solid #fff; display: flex; align-items: center; justify-content: center; }
.sysbtn i { width: 18px; height: 6px; border: 1px solid #fff; border-right-color: #888; border-bottom: 2px solid #888; margin-top: 2px; }
.caption { flex: 1; overflow: hidden; white-space: nowrap; background: #d7d7d7; border-top: 1px solid #8a8a8a; border-bottom: 1px solid #8a8a8a; border-left: 2px solid #8a8a8a; padding-left: 14px; color: #cc0000; font: bold 21px/30px 'DejaVu Sans', sans-serif; }
.win { margin-left: 4px; border-left: 1px solid #8c8c8c; width: 1009px; height: 670px; }
.menu { height: 41px; border-bottom: 6px solid #d00a0a; display: flex; background: #f1f1f1; padding-left: 14px; white-space: nowrap; line-height: 36px; letter-spacing: .6px; overflow: hidden; }
.menu span { flex: none; }
.menu b { font-weight: normal; border-bottom: 1.500px solid #111; }
.tb { display: flex; overflow: hidden; background: linear-gradient(#f3f3f3 0, #f0f0f0 18%, #d3d3d3 32%, #cfcfcf 66%, #b6b6b6 76%, #b3b3b3 100%); border-bottom: 2px solid #8c8c8c; white-space: nowrap; }
.tb1 { height: 54px; }
.tb2 { height: 46px; align-items: flex-start; background: linear-gradient(#f3f3f3 0, #e6e6e6 15%, #d3d3d3 35%, #cfcfcf 68%, #b6b6b6 78%, #b3b3b3 100%); }
.tb3, .tb4 { height: 47px; background: linear-gradient(#f3f3f3 0, #e8e8e8 14%, #d3d3d3 30%, #cfcfcf 66%, #b6b6b6 76%, #b3b3b3 100%); }
.on { background: linear-gradient(#b0b0b0, #dedede 45%, #f4f4f4); border-radius: 8px; height: 44px; }
.sh1 { margin-left: 1px; }
.sh2 { margin-left: 2px; }
.serifR { font: bold 17px 'Liberation Serif', serif; fill: #111; }
.more { font: bold 20px 'Noto Sans', sans-serif; fill: #111; }
.abc { font: bold 14px 'Open Sans', sans-serif; fill: #909090; }
.combo { margin: 14px 0 0 0; width: 40px; height: 33px; background: #f6f6f6; border: 1.500px solid #999; border-radius: 8px; padding-left: 2px; line-height: 30px; flex: none; letter-spacing: .4px; }
.sel { line-height: 47px; flex: none; font-size: 16px; letter-spacing: .55px; }
.s1 { width: 101px; } .s2 { width: 76.500px; } .s3 { width: 69px; } .s4 { width: 69.500px; }
.xl { width: 20px; background: linear-gradient(#777, #777) 0 9px / 2px 28px no-repeat; padding-left: 5px; }
.coord { width: 80px; height: 35px; margin-top: 6px; background: #f4f4f4; border: 1.500px solid #999; border-radius: 3px; line-height: 32px; padding-left: 4px; flex: none; font-size: 16.500px; }
.main { display: flex; height: 397px; background: #d2d2d2; overflow: hidden; }
.left { width: 273px; margin-right: 10px; flex: none; background: #f1f1f1; border-right: 1px solid #aaa; padding-top: 1px; }
.hd { height: 31px; border: 1px solid #666; border-bottom: 3px solid #666; border-left-width: 2px; background: linear-gradient(#f4f4f4, #e0e0e0 30%, #d2d2d2 50%, #b6b6b6 75%, #b2b2b2); display: flex; align-items: center; padding: 0 1px 0 18px; }
.hd strong { flex: 1; letter-spacing: .7px; color: #111; }
.hb { width: 20px; height: 21px; border: 1px solid #aaa; border-radius: 6px; background: #e9e9e9; margin-left: 4px; display: flex !important; align-items: center; justify-content: center; font-weight: bold; font-size: 18px; }
.row { display: flex; align-items: center; border-bottom: 1px solid #c2c2c2; overflow: hidden; }
.cb { width: 18px; height: 18px; background: #ebebeb; border: 1px solid #ccc; border-bottom: 2px solid #888; border-radius: 2px; }
.cb svg { margin: -1px; }
.checks { height: 32px; padding-left: 2px; letter-spacing: .2px; }
.checks span { margin-left: 8px; }
.w1 { width: 51px; } .w2 { width: 53px; }
.filter { height: 32px; }
.fbtn { width: 47px; height: 29px; border: 1px solid #999; border-bottom-width: 2px; border-radius: 14px; line-height: 28px; background: linear-gradient(#f4f4f4, #e2e2e2 60%, #d0d0d0); padding-left: 1px; font-size: 16.500px; letter-spacing: .2px; }
.finput { width: 192px; height: 29px; margin-left: 5px; border: 1px solid #aaa; border-radius: 12px 8px 8px 12px; display: flex; align-items: center; background: #f5f5f5; padding-left: 4px; overflow: hidden; }
.finput em { font-style: normal; color: #c9c9c9; margin-left: 4px; flex: 1; letter-spacing: 1px; }
.drop { width: 26px; height: 28px; background: linear-gradient(90deg, #9c0000, #c40000); border-radius: 0 8px 8px 0; display: flex !important; align-items: center; justify-content: center; }
.sm { margin-left: 10px; }
.nwell { height: 32px; background: linear-gradient(#f4f4f4, #e9e9e9 60%, #d2d2d2); border: 1px solid #a0a0a0; border-right: 0; border-radius: 0 8px 8px 0; letter-spacing: .35px; }
.nwell span { flex: 1; margin-left: 5px; }
.sw { width: 26px; height: 27px; background: #000; margin-left: 4px; border: 1.500px solid #000; outline: 1px solid #6a1ea0; outline-offset: -3px; }
.av { height: 33px; padding-left: 15px; }
.av span { width: 68.400px; flex: none; display: flex; align-items: center; font-size: 16.500px; }
.av svg { margin-left: auto; margin-right: 16px; }
.pdk { height: 33px; background: #f1f1f1; }
.lock { width: 31px; height: 31px; border: 1px solid #aaa; border-radius: 13px; background: #ccc; padding: 2px 5px; margin-right: 1px; }
.pdk span { flex: 1; height: 31px; border: 1px solid #999; border-bottom-width: 2px; border-radius: 14px; background: linear-gradient(#f4f4f4, #e2e2e2 50%, #cdcdcd); text-align: center; line-height: 29px; padding-right: 2px; }
.gap { height: 6px; border-top: 2px solid #333; background: #cfcfcf; }
.objh { height: 30px; }
.tree { height: 62px; display: flex; border-left: 3px solid #222; border-top: 2px solid #222; }
.grid { width: 242px; }
.th { height: 29px; background: linear-gradient(#d0d0d0, #a9a9a9 60%, #b3b3b3); display: flex; align-items: center; text-align: center; }
.th strong { width: 171px; letter-spacing: .5px; }
.th span { width: 34.500px; border-left: 2px solid #888; flex: none; padding-right: 2px; }
.tr { height: 31px; display: flex; align-items: center; padding-left: 17px; padding-bottom: 5px; }
.twig { width: 14px; height: 34px; border-left: 1.500px dotted #555; background: repeating-linear-gradient(90deg, #555 0 1px, transparent 1px 3px) 0 13px / 14px 1px no-repeat; }
.nm { width: 148px; margin-left: 5px; letter-spacing: .3px; flex: none; }
.tr .cb { margin-right: 16px; }
.tabs { display: flex; overflow: hidden; }
.t1 { height: 36px; border-top: 2px solid #111; border-bottom: 1px solid #bbb; margin-top: 1px; }
.t2 { height: 37px; border-top: 2px solid #111; margin-top: 1px; }
.tab { background: #d0d0d0; border-right: 1px solid #999; border-bottom: 1px solid #999; flex: none; white-space: nowrap; letter-spacing: .5px; }
.act { background: #f1f1f1; }
.t1 .act { width: 92px; padding: 5px 0 0 13px; }
.g { width: 67px; padding: 4px 0 0 10px; }
.peek { width: 87px; }
.prow { height: 26px; border: 2px solid #111; border-left: 0; display: flex; align-items: center; overflow: hidden; }
.prow b { width: 27px; font-weight: normal; margin-left: -5px; font-size: 16px; margin-right: 6px; flex: none; }
.prow .cb { margin-right: 16px; }
.prow2 { display: flex; padding: 3px 0 0 28px; height: 10px; overflow: hidden; }
.prow2 .cb { margin-right: 16px; }
.p { width: 61px; padding: 6px 0 0 17px; } .n { width: 62px; padding: 4px 0 0 11px; } .a { width: 150px; padding: 4px 0 0 12px; }
.canvas { flex: none; }
.lbl { font-family: 'DejaVu Sans', sans-serif; font-weight: 200; fill: #949494; }
.big { font: 200 36px 'DejaVu Sans', sans-serif; fill: #fff; stroke: #fff; stroke-width: .5px; }
.grn { font: 15px 'DejaVu Sans', sans-serif; fill: #0c9a14; }
.right { width: 160px; flex: none; margin-left: 9px; background: #f1f1f1; padding-top: 1px; border-left: 1px solid #999; }
.rh { border-left-width: 1px; overflow: hidden; white-space: nowrap; padding-left: 19px; }
.rh strong { letter-spacing: .9px; }
.rtb { height: 35px; display: flex; background: linear-gradient(#f4f4f4, #d6d6d6 50%, #c0c0c0); border-bottom: 1px solid #aaa; border-radius: 0 0 0 4px; overflow: hidden; }
.tbl { margin: 6px 0 0 1px; border-left: 3px solid #222; border-top: 3px solid #222; height: 98px; overflow: hidden; }
.trow { display: grid; grid-template-columns: 35px 37.500px 37.500px 1fr; }
.trow span { border-right: 1px solid #bbb; display: flex; align-items: center; justify-content: center; overflow: hidden; padding-right: 4px; }
.head { height: 28px; background: linear-gradient(#cfcfcf, #aaa); }
.head span { border-right-color: #777; justify-content: flex-start; padding-right: 0; }
.head .dz { font-weight: bold; padding-left: 4px; letter-spacing: .7px; border-right: 0; }
.r1 { height: 29px; background: repeating-conic-gradient(#19f1f5 0 25%, #a8f4f7 0 50%) 0 0 / 2px 2px; }
.r2 { height: 32px; }
.r3 { height: 5px; background: #8e8e8e; }
.bx { width: 7px; height: 7px; border: 2px solid #222; background: #999; }
.col { width: 19px; height: 18px; border: 1px solid #bbb; margin-right: 4px; }
.peach { background: #fbdcb0; } .mag { background: #f400f4; }
.trow .last { justify-content: flex-start; padding-left: 7px; border-right: 0; }
.last b { margin-left: 12px; font-weight: normal; font-size: 16px; }
.blue { color: #1414e8; font-style: italic; }
.band { height: 8px; margin-top: 3px; border-top: 1px solid #ccc; border-bottom: 3px solid #cdcdcd; }
.cut { height: 11px; margin-top: 9px; overflow: hidden; padding-left: 129px; line-height: 14px; white-space: nowrap; }
.cut2 { height: 13px; margin-top: 3px; overflow: hidden; padding-left: 146px; line-height: 20px; color: #2020e0; }
.cut2 span { display: block; }
.rtb2 { height: 33px; margin: 1px 0 0 3px; display: flex; border-top: 1px solid #ccc; border-bottom: 1px solid #bbb; background: linear-gradient(#ededed, #d2d2d2 40%, #cacaca); overflow: hidden; }
.hbar { height: 18px; margin-left: 3px; border-bottom: 1.500px solid #ccc; background: linear-gradient(#b2b2b2, #b2b2b2) 6px 6px / 200px 8px no-repeat; }
.blk { height: 23px; margin-top: 13px; border-top: 3px solid #111; background: linear-gradient(#cdcdcd, #cdcdcd) 0 6px / 200px 3px no-repeat; }
.info { height: 98px; margin: -9px 0 0 2px; }
.leg { display: flex; color: #cc0000; letter-spacing: .7px; height: 22px; align-items: center; }
.leg i { width: 10px; height: 11px; align-self: flex-end; border: 1px solid #aaa; border-right: 0; border-bottom: 0; border-radius: 6px 0 0 0; margin-right: 3px; }
.leg i.r { width: auto; flex: 1 0 20px; border-left: 0; margin: 0 0 0 4px; border-radius: 0; }
.side { border-left: 1px solid #aaa; padding: 7px 0 0 4px; }
.box { height: 72px; border-top: 3px solid #222; border-left: 3px solid #222; }
.status { height: 28px; align-items: center; position: relative; background: linear-gradient(#f3f3f3, #e0e0e0 25%, #d0d0d0 60%, #b8b8b8 90%); letter-spacing: .47px; }
.g3 { width: 9px; height: 10px; margin-left: 6px; margin-right: 1px; background: repeating-linear-gradient(90deg, #888 0 1px, #ddd 1px 3px); }
.m1 { width: 417px; flex: none; }
.foot { height: 10px; padding-top: 2px; }
.foot i { width: 40px; height: 7px; margin-left: 2px; background: #e3d8d8; border-right: 1.500px solid #555; }
</style>
